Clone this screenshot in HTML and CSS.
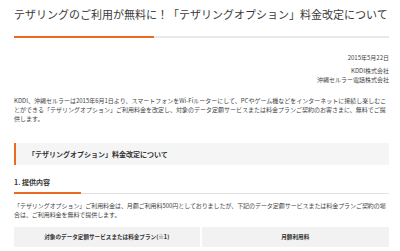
FILE: index.html
```html
<!DOCTYPE html>
<html lang="ja">
<head>
<meta charset="utf-8">
<link rel="stylesheet" href="styles.css">
</head>
<body>
<main class="page">
  <h1 class="title">テザリングのご利用が無料に！「テザリングオプション」料金改定について</h1>
  <div class="title-rule"><span class="title-rule-accent"></span></div>
  <div class="meta">
    <p class="date">2015年5月22日</p>
    <p class="org">KDDI株式会社<br>沖縄セルラー電話株式会社</p>
  </div>
  <p class="lead">KDDI、沖縄セルラーは2015年6月1日より、スマートフォンをWi-Fiルーターにして、PCやゲーム機などをインターネットに接続し楽しむことができる「テザリングオプション」ご利用料金を改定し、対象のデータ定額サービスまたは料金プランご契約のお客さまに、無料でご提供します。</p>
  <h2 class="box-head">「テザリングオプション」料金改定について</h2>
  <h3 class="sub-head">1.&nbsp;提供内容</h3>
  <p class="body">「テザリングオプション」ご利用料金は、月額ご利用料500円としておりましたが、下記のデータ定額サービスまたは料金プランご契約の場合は、ご利用料金を無料で提供します。</p>
  <table class="fee-table">
    <thead>
      <tr><th>対象のデータ定額サービスまたは料金プラン(※1)</th><th>月額利用料</th></tr>
    </thead>
  </table>
</main>
</body>
</html>
```
FILE: styles.css
```css
* { box-sizing: border-box; }
html, body { margin: 0; padding: 0; background: #fff; }
body {
  font-family: "Noto Sans CJK JP", "Noto Sans", sans-serif;
  color: #333;
}
.page { padding: 6px 11px 0 14px; }
.title {
  margin: 0;
  font-size: 11px;
  line-height: 16px;
  font-weight: normal;
  color: #3a3a3a;
  white-space: nowrap;
}
.title-rule {
  margin-top: 14px;
  height: 2px;
  background: #e8e8e8;
  display: flex;
}
.title-rule-accent { width: 140px; background: #ec6a1e; }
.meta { text-align: right; font-size: 6px; color: #444; }
.date { margin: 15px 0 0; line-height: 9px; }
.org { margin: 5px 0 0; line-height: 8.5px; }
.lead, .body {
  font-size: 6px;
  line-height: 8.8px;
  color: #444;
  margin: 0;
}
.lead { margin-top: 13px; }
.box-head {
  margin: 20px 0 0;
  height: 22px;
  display: flex;
  align-items: center;
  padding-left: 12px;
  font-size: 7px;
  font-weight: bold;
  color: #333;
  background: #f5f5f5;
  border-left: 2.5px solid #ec6a1e;
}
.sub-head {
  margin: 12px 0 0;
  font-size: 7px;
  line-height: 10px;
  font-weight: bold;
  color: #333;
  padding-bottom: 7px;
  background:
    linear-gradient(#ec6a1e, #ec6a1e) left bottom / 67px 2px no-repeat,
    linear-gradient(#e2e2e2, #e2e2e2) left bottom / 100% 1px no-repeat;
}
.body { margin-top: 8px; letter-spacing: -0.06px; }
.fee-table {
  margin-top: 7px;
  width: 100%;
  border-collapse: separate;
  border-spacing: 0;
}
.fee-table th {
  width: 50%;
  background: #f2f2f2;
  font-size: 5.6px;
  font-weight: bold;
  color: #333;
  height: 20px;
  padding: 0;
  border-right: 2px solid #fff;
}
.fee-table th:last-child { border-right: 0; }
```
